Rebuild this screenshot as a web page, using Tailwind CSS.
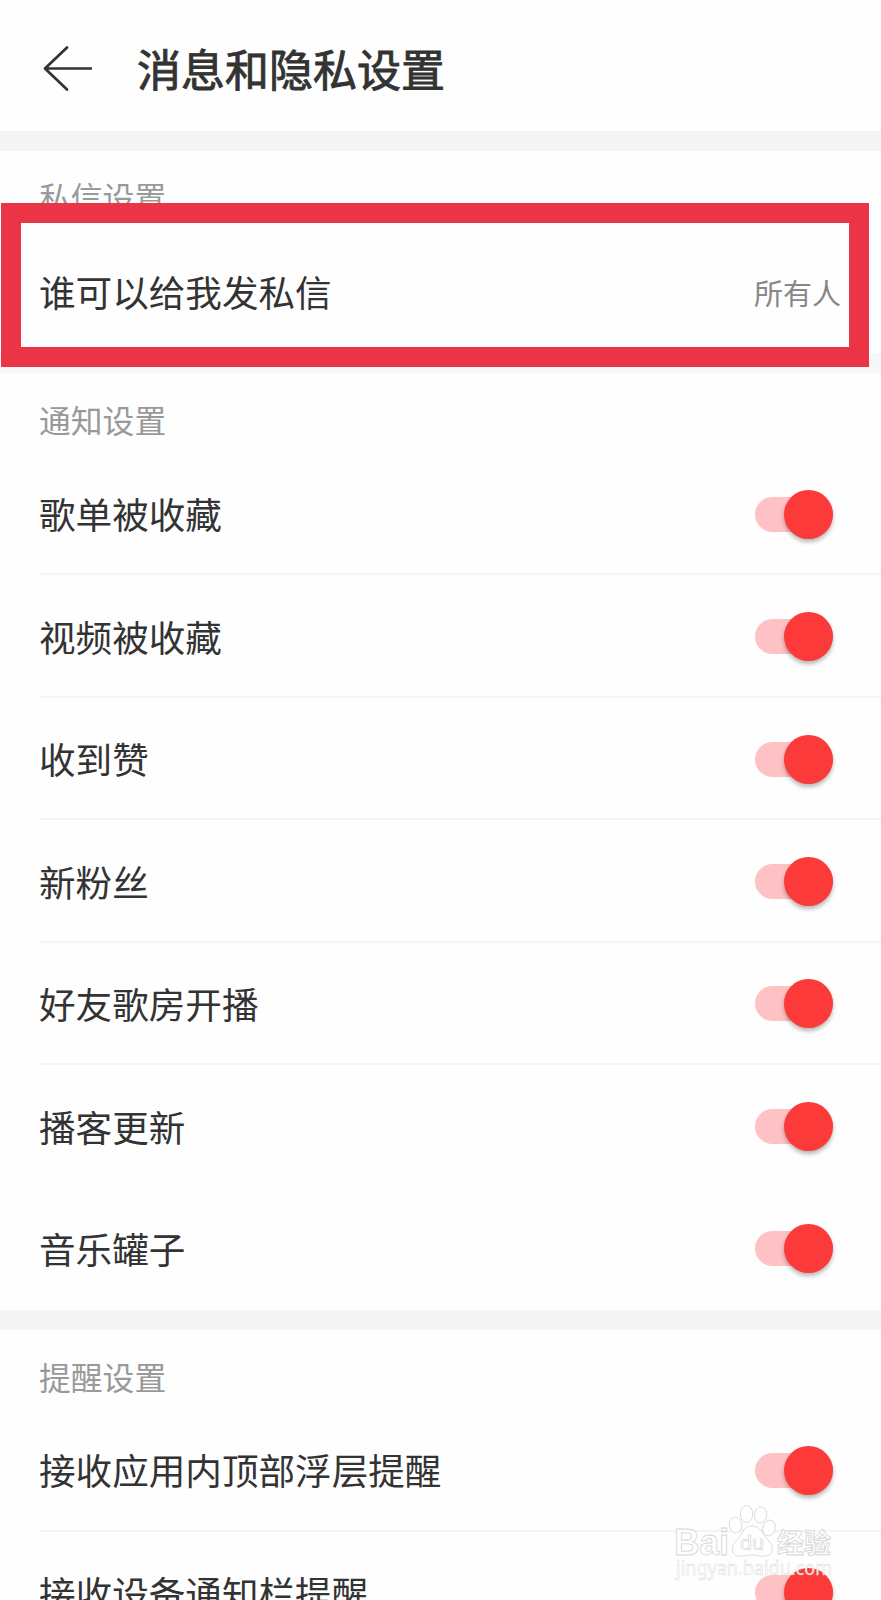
<!DOCTYPE html>
<html lang="zh-CN">

<head>
   <meta charset="UTF-8">
   <meta name="viewport" content="width=device-width, initial-scale=1.0">
   <title>消息和隐私设置</title>
   <script src="https://cdn.jsdelivr.net/npm/@tailwindcss/browser@4"></script>
</head>

<body class="bg-[#fefefe] font-['Noto_Sans_CJK_SC',sans-serif] text-[#333333]">
   <div class="relative w-full h-[1600px] overflow-hidden">
      <header class="flex items-center h-[131px] pl-[42px] pt-[4px]">
         <svg class="w-[50px] h-[46px] shrink-0" viewBox="0 0 50 46" fill="none" stroke="#333333" stroke-width="2.7"
            stroke-linecap="round" stroke-linejoin="round">
            <path d="M25 2.5L3 23.5L25 44.5M3 23.5H49" />
         </svg>
         <h1 class="ml-[45px] text-[44px] leading-none [-webkit-text-stroke:0.9px_#333333]">消息和隐私设置</h1>
      </header>

      <div class="h-5 bg-[#f5f5f5]"></div>
      <section>
         <h2 class="h-20 pt-[29px] pl-[39px] text-[31.8px] leading-[32px] text-[#999999]">私信设置</h2>
         <div class="flex items-center justify-between h-[122px] pl-[39px] pr-[40px]">
            <span class="text-[36.6px] leading-none">谁可以给我发私信</span>
            <span class="text-[29px] leading-none text-[#888888]">所有人</span>
         </div>
      </section>

      <div class="h-5 bg-[#f7f7f7]"></div>
      <section>
         <h2 class="h-20 pt-[30px] pl-[39px] text-[31.8px] leading-[32px] text-[#999999]">通知设置</h2>
         <div id="noticeList"></div>
      </section>

      <div class="h-5 bg-[#f5f5f5]"></div>
      <section>
         <h2 class="h-[79px] pt-[30px] pl-[39px] text-[31.8px] leading-[32px] text-[#999999]">提醒设置</h2>
         <div id="remindList"></div>
      </section>

      <!-- highlight frame -->
      <div class="absolute left-px top-[203px] w-[868px] h-[164px] border-20 border-[#eb3546]"></div>

      <!-- watermark -->
      <svg class="absolute left-[670px] top-[1500px] w-[170px] h-[90px]" viewBox="0 0 170 90" fill="#ffffff"
         fill-opacity="0.85" stroke="#d4d4d4" stroke-width="0.8">
         <text x="4" y="55" font-family="Liberation Sans" font-weight="bold" font-size="36" textLength="55"
            lengthAdjust="spacingAndGlyphs">Bai</text>
         <ellipse cx="65.5" cy="25" rx="6.2" ry="8" transform="rotate(-8 65.5 25)" />
         <ellipse cx="76.5" cy="14" rx="6.2" ry="8.5" />
         <ellipse cx="90.5" cy="15" rx="6.2" ry="8" transform="rotate(8 90.5 15)" />
         <ellipse cx="99" cy="28" rx="6.2" ry="8" transform="rotate(15 99 28)" />
         <path
            d="M82 26C91 26 93 35 98 40C104 45 104 55 96 56C91 57 87 55 82 55C76 55 72 57 68 56C60 54 61 45 67 40C72 35 73 26 82 26Z" />
         <text x="70" y="50" font-family="Liberation Sans" font-size="20" stroke-width="0.6" textLength="24"
            lengthAdjust="spacingAndGlyphs">du</text>
         <text x="107" y="53" font-family="Noto Sans CJK SC" font-weight="bold" font-size="27">经验</text>
         <text x="6" y="75" font-family="Noto Sans" font-size="19" stroke-width="0.4" textLength="156"
            lengthAdjust="spacingAndGlyphs">jingyan.baidu.com</text>
      </svg>
   </div>

   <script>
      const notices = [
         { label: "歌单被收藏", line: true },
         { label: "视频被收藏", line: true },
         { label: "收到赞", line: true },
         { label: "新粉丝", line: true },
         { label: "好友歌房开播", line: true },
         { label: "播客更新", line: false },
         { label: "音乐罐子", line: false },
      ];
      const reminds = [
         { label: "接收应用内顶部浮层提醒", line: true },
         { label: "接收设备通知栏提醒", line: false },
      ];

      const renderList = (id, items) => {
         let html = "";
         for (const item of items) {
            html += `
               <div class="ml-[39px] h-[122.45px] flex items-center justify-between pr-[48px] border-b-2 ${item.line ? 'border-[#f4f4f4]' : 'border-transparent'}">
                  <span class="text-[36.6px] leading-none pt-[3px]">${item.label}</span>
                  <span class="mt-[2px] flex items-center justify-end w-[78px] h-[35px] rounded-full bg-[#ffc2c4]">
                     <span class="size-[49px] shrink-0 rounded-full bg-[#fc3a3a] shadow-[0_3px_4px_rgba(0,0,0,0.28)]"></span>
                  </span>
               </div>
            `;
         }
         document.getElementById(id).innerHTML = html;
      }

      renderList("noticeList", notices);
      renderList("remindList", reminds);
   </script>
</body>

</html>
